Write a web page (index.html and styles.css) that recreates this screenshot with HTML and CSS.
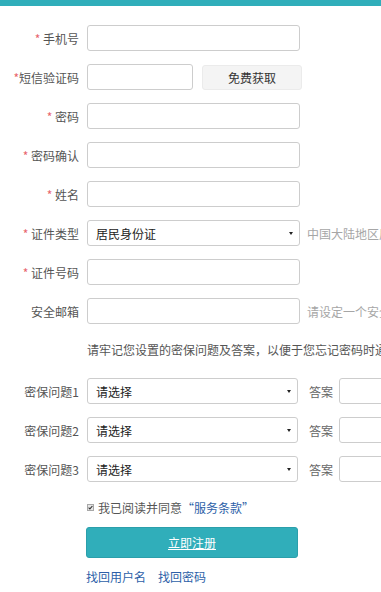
FILE: index.html
```html
<!DOCTYPE html>
<html lang="zh-CN">
<head>
<meta charset="utf-8">
<title>注册</title>
<link rel="stylesheet" href="styles.css">
</head>
<body>
<div class="topbar"></div>
<form class="form">
  <div class="row">
    <label class="lbl"><span class="req">*</span> 手机号</label>
    <input class="ipt" type="text">
  </div>
  <div class="row">
    <label class="lbl"><span class="req">*</span>短信验证码</label>
    <input class="ipt ipt-short" type="text">
    <button type="button" class="btn-code">免费获取</button>
  </div>
  <div class="row">
    <label class="lbl"><span class="req">*</span> 密码</label>
    <input class="ipt" type="password">
  </div>
  <div class="row">
    <label class="lbl"><span class="req">*</span> 密码确认</label>
    <input class="ipt" type="password">
  </div>
  <div class="row">
    <label class="lbl"><span class="req">*</span> 姓名</label>
    <input class="ipt" type="text">
  </div>
  <div class="row">
    <label class="lbl"><span class="req">*</span> 证件类型</label>
    <div class="sel-wrap">
      <select class="sel"><option>居民身份证</option></select>
    </div>
    <span class="hint">中国大陆地区居民请选择居民身份证</span>
  </div>
  <div class="row">
    <label class="lbl"><span class="req">*</span> 证件号码</label>
    <input class="ipt" type="text">
  </div>
  <div class="row">
    <label class="lbl">安全邮箱</label>
    <input class="ipt" type="text">
    <span class="hint">请设定一个安全邮箱</span>
  </div>
  <p class="note">请牢记您设置的密保问题及答案，以便于您忘记密码时通过密保问题找回密码</p>
  <div class="row">
    <label class="lbl">密保问题1</label>
    <div class="sel-wrap sel-q">
      <select class="sel"><option>请选择</option></select>
    </div>
    <span class="ans-lbl">答案</span>
    <input class="ipt ipt-ans" type="text">
  </div>
  <div class="row">
    <label class="lbl">密保问题2</label>
    <div class="sel-wrap sel-q">
      <select class="sel"><option>请选择</option></select>
    </div>
    <span class="ans-lbl">答案</span>
    <input class="ipt ipt-ans" type="text">
  </div>
  <div class="row">
    <label class="lbl">密保问题3</label>
    <div class="sel-wrap sel-q">
      <select class="sel"><option>请选择</option></select>
    </div>
    <span class="ans-lbl">答案</span>
    <input class="ipt ipt-ans" type="text">
  </div>
  <div class="agree">
    <span class="chk"><svg width="7" height="7" viewBox="0 0 7 7"><rect x="0.5" y="0.5" width="6" height="6" fill="#e6e6e6" stroke="#a8a8a8"/><path d="M1.6 3.6 L2.9 4.9 L5.4 2" fill="none" stroke="#333" stroke-width="1.1"/></svg></span>
    <span class="agree-text">我已阅读并同意<a class="terms" href="#">“服务条款”</a></span>
  </div>
  <div class="submit-row">
    <a class="btn-submit" href="#">立即注册</a>
  </div>
  <div class="links">
    <a href="#">找回用户名</a>
    <a href="#">找回密码</a>
  </div>
</form>
</body>
</html>
```
FILE: styles.css
```css
html, body {
  margin: 0;
  padding: 0;
  overflow: hidden;
  background: #fff;
}
body {
  font-family: "Noto Sans CJK SC", "Noto Sans", sans-serif;
  font-size: 12px;
  color: #555;
  width: 381px;
}
.topbar {
  height: 6px;
  background: #30aeba;
}
.form {
  padding-top: 19px;
  width: 700px;
}
.row {
  display: flex;
  align-items: center;
  height: 26px;
  margin-bottom: 13px;
  white-space: nowrap;
}
.lbl {
  width: 79px;
  flex: none;
  text-align: right;
  margin-right: 8px;
  color: #555;
  font-size: 12px;
}
.req {
  color: #e8646c;
}
.ipt {
  box-sizing: border-box;
  width: 213px;
  height: 26px;
  border: 1px solid #cdcdcd;
  border-radius: 3px;
  padding: 0 8px;
  font-family: inherit;
  font-size: 12px;
  outline: none;
  flex: none;
}
.ipt-short {
  width: 106px;
}
.btn-code {
  box-sizing: border-box;
  margin-left: 9px;
  width: 100px;
  height: 25px;
  border: 1px solid #ebebeb;
  border-radius: 3px;
  background: #f4f4f4;
  color: #333;
  font-family: inherit;
  font-size: 12px;
  padding: 0;
}
.sel-wrap {
  position: relative;
  width: 213px;
  height: 26px;
  flex: none;
}
.sel-wrap::after {
  content: "";
  position: absolute;
  right: 7px;
  top: 12px;
  border-left: 2px solid transparent;
  border-right: 2px solid transparent;
  border-top: 3px solid #222;
}
.sel-q {
  width: 211px;
}
.sel {
  -webkit-appearance: none;
  appearance: none;
  box-sizing: border-box;
  width: 100%;
  height: 26px;
  border: 1px solid #cdcdcd;
  border-radius: 3px;
  background: #fff;
  padding: 0 8px;
  font-family: inherit;
  font-size: 12px;
  color: #222;
  outline: none;
}
.hint {
  margin-left: 7px;
  color: #a6a6a6;
  font-size: 12px;
}
.note {
  margin: 16px 0 18px 87px;
  line-height: 20px;
  height: 20px;
  white-space: nowrap;
  color: #555;
  font-size: 12px;
}
.ans-lbl {
  margin-left: 11px;
  width: 24px;
  margin-right: 6px;
  color: #666;
  font-size: 12px;
}
.ipt-ans {
  width: 100px;
}
.agree {
  display: flex;
  align-items: center;
  margin: 15px 0 0 87px;
  height: 20px;
  color: #555;
  font-size: 12px;
}
.chk {
  display: flex;
  width: 7px;
  height: 7px;
  margin-right: 4px;
}
.terms {
  color: #2d5fa8;
  text-decoration: none;
}
.submit-row {
  margin: 10px 0 0 86px;
}
.btn-submit {
  display: flex;
  align-items: center;
  justify-content: center;
  box-sizing: border-box;
  width: 212px;
  height: 31px;
  background: #30aeba;
  border: 1px solid #2b9fab;
  border-radius: 3px;
  color: #fff;
  font-size: 12px;
  text-decoration: underline;
}
.links {
  display: flex;
  gap: 12px;
  margin: 11px 0 0 86px;
  line-height: 16px;
}
.links a {
  color: #2d5fa8;
  text-decoration: none;
  font-size: 12px;
}
```
